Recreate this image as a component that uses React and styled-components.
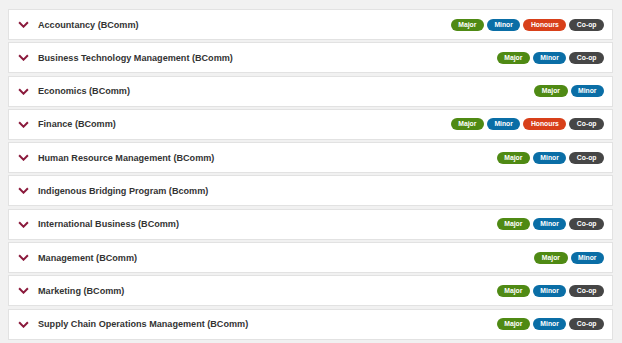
import styled, { createGlobalStyle } from "styled-components";

const programs = [
  { name: "Accountancy (BComm)", tags: ["Major", "Minor", "Honours", "Co-op"] },
  { name: "Business Technology Management (BComm)", tags: ["Major", "Minor", "Co-op"] },
  { name: "Economics (BComm)", tags: ["Major", "Minor"] },
  { name: "Finance (BComm)", tags: ["Major", "Minor", "Honours", "Co-op"] },
  { name: "Human Resource Management (BComm)", tags: ["Major", "Minor", "Co-op"] },
  { name: "Indigenous Bridging Program (Bcomm)", tags: [] },
  { name: "International Business (BComm)", tags: ["Major", "Minor", "Co-op"] },
  { name: "Management (BComm)", tags: ["Major", "Minor"] },
  { name: "Marketing (BComm)", tags: ["Major", "Minor", "Co-op"] },
  { name: "Supply Chain Operations Management (BComm)", tags: ["Major", "Minor", "Co-op"] },
];

const tagColors = {
  Major: "#4f8a14",
  Minor: "#0a6ea6",
  Honours: "#d8401a",
  "Co-op": "#464646",
};

function App() {
  return (
    <>
      <GlobalStyle />
      <List>
        {programs.map((p) => (
          <Card key={p.name}>
            <Chevron viewBox="0 0 10 6">
              <path d="M1 1 L5 5 L9 1" />
            </Chevron>
            <Title>{p.name}</Title>
            <Tags>
              {p.tags.map((t) => (
                <Tag key={t} $color={tagColors[t]}>
                  {t}
                </Tag>
              ))}
            </Tags>
          </Card>
        ))}
      </List>
    </>
  );
}

const GlobalStyle = createGlobalStyle`
  body {
    margin: 0;
    background: #f1f1f1;
    font-family: "Liberation Sans", Arial, sans-serif;
  }
`;

const List = styled.div`
  display: flex;
  flex-direction: column;
  gap: 2.3px;
  padding: 9px 9px 0 8px;
`;

const Card = styled.div`
  height: 31px;
  box-sizing: border-box;
  display: flex;
  align-items: center;
  background: #fff;
  border: 1px solid #e2e2e2;
  padding: 0 8px 0 9px;
`;

const Chevron = styled.svg`
  width: 11px;
  height: 7px;
  margin-right: 9px;
  flex-shrink: 0;

  path {
    fill: none;
    stroke: #8b1a3c;
    stroke-width: 1.8;
  }
`;

const Title = styled.span`
  flex: 1;
  font-size: 9.1px;
  font-weight: 700;
  color: #333;
`;

const Tags = styled.div`
  display: flex;
  gap: 3px;
`;

const Tag = styled.span`
  height: 12px;
  line-height: 12px;
  padding: 0 7.5px;
  border-radius: 6px;
  background: ${(p) => p.$color};
  color: #fff;
  font-size: 6.8px;
  font-weight: 700;
`;

export default App;
